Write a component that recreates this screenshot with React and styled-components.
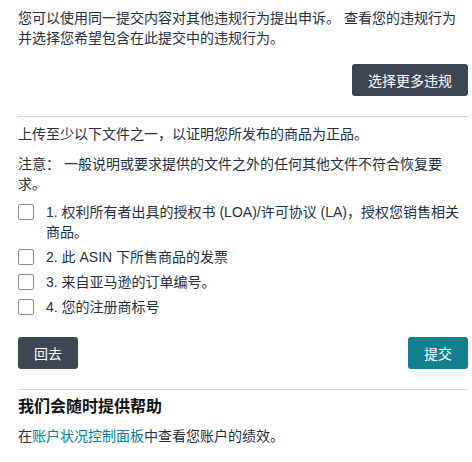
import React from "react";
import styled, { createGlobalStyle } from "styled-components";

const GlobalStyle = createGlobalStyle`
  html, body {
    margin: 0;
    padding: 0;
    background: #fff;
  }
  body {
    font-family: "Liberation Sans", "Noto Sans CJK SC", Arial, sans-serif;
    font-size: 14px;
    line-height: 20px;
    color: #232f3e;
  }
`;

const Page = styled.div`
  width: 450px;
  padding: 8px 4px 0 18px;
`;

const Text = styled.p`
  margin: ${(p) => p.$mt || 0}px 0 0;
  font-size: 14px;
  line-height: 20px;
`;

const ButtonRow = styled.div`
  display: flex;
  justify-content: ${(p) => p.$justify || "flex-end"};
  margin-top: ${(p) => p.$mt || 0}px;
`;

const Button = styled.button`
  height: 32px;
  padding: 0 16px;
  border: none;
  border-radius: 3px;
  font-family: inherit;
  font-size: 14px;
  color: #fff;
  cursor: pointer;
  background: ${(p) => (p.$primary ? "#13808f" : "#3d4653")};
`;

const Divider = styled.hr`
  margin: ${(p) => p.$mt || 0}px 0 0;
  border: none;
  border-top: 1px solid #d5d9d9;
`;

const List = styled.ul`
  list-style: none;
  margin: 8px 0 0;
  padding: 0;
  display: flex;
  flex-direction: column;
  gap: 5px;
`;

const Item = styled.li`
  display: flex;
  align-items: flex-start;
  gap: 12px;
  line-height: 20px;
`;

const Box = styled.span`
  flex: none;
  width: 14px;
  height: 14px;
  margin-top: 2px;
  border: 1px solid #888c8c;
  border-radius: 2px;
  background: #fff;
`;

const Heading = styled.h3`
  margin: 5px 0 0;
  font-size: 16px;
  line-height: 24px;
  font-weight: 700;
  color: #0f1111;
`;

const Link = styled.a`
  color: #008296;
  text-decoration: none;
`;

const items = [
  "1. 权利所有者出具的授权书 (LOA)/许可协议 (LA)，授权您销售相关商品。",
  "2. 此 ASIN 下所售商品的发票",
  "3. 来自亚马逊的订单编号。",
  "4. 您的注册商标号",
];

export default function App() {
  return (
    <>
      <GlobalStyle />
      <Page>
        <Text>
          您可以使用同一提交内容对其他违规行为提出申诉。 查看您的违规行为并选择您希望包含在此提交中的违规行为。
        </Text>
        <ButtonRow $mt={16}>
          <Button>选择更多违规</Button>
        </ButtonRow>
        <Divider $mt={20} />
        <Text $mt={7}>上传至少以下文件之一，以证明您所发布的商品为正品。</Text>
        <Text $mt={10}>
          注意： 一般说明或要求提供的文件之外的任何其他文件不符合恢复要求。
        </Text>
        <List>
          {items.map((t) => (
            <Item key={t}>
              <Box />
              <span>{t}</span>
            </Item>
          ))}
        </List>
        <ButtonRow $mt={20} $justify="space-between">
          <Button>回去</Button>
          <Button $primary>提交</Button>
        </ButtonRow>
        <Divider $mt={20} />
        <Heading>我们会随时提供帮助</Heading>
        <Text $mt={7}>
          在<Link href="#">账户状况控制面板</Link>中查看您账户的绩效。
        </Text>
      </Page>
    </>
  );
}
